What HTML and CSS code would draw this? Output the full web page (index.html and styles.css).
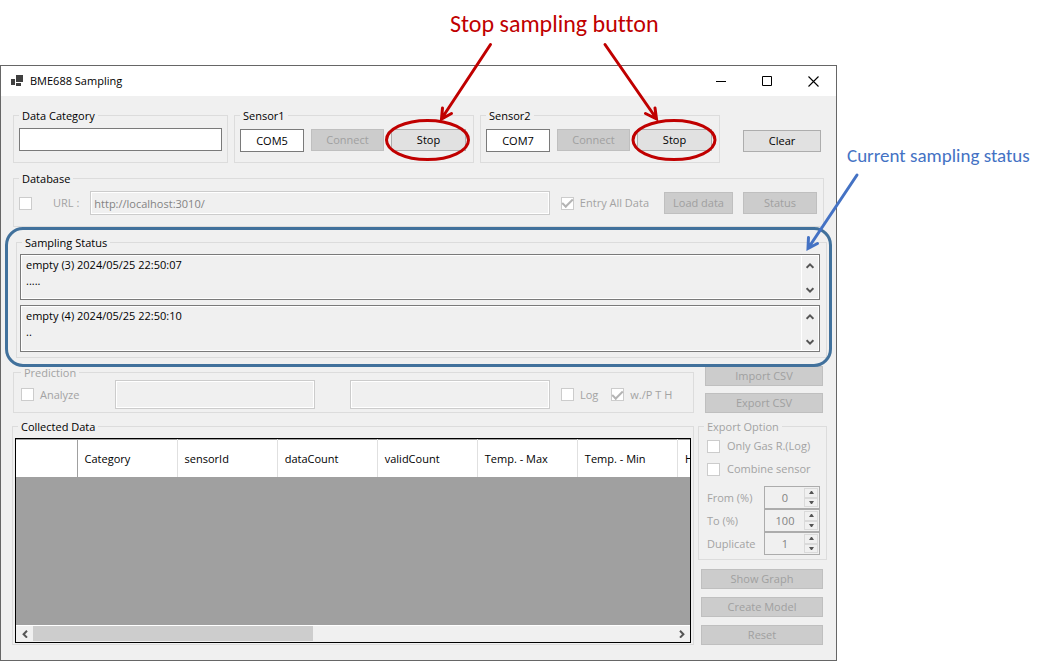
FILE: index.html
```
<!DOCTYPE html>
<html lang="en">
<head>
<meta charset="utf-8">
<title>BME688 Sampling</title>
<link rel="stylesheet" href="styles.css">
</head>
<body>
<svg class="symbols" aria-hidden="true">
  <symbol id="up" viewBox="0 0 8 8"><path d="M0.6 5.8 4 2.4 7.4 5.8" fill="none" stroke="#555" stroke-width="2"/></symbol>
  <symbol id="down" viewBox="0 0 8 8"><path d="M0.6 2.2 4 5.6 7.4 2.2" fill="none" stroke="#555" stroke-width="2"/></symbol>
  <symbol id="left" viewBox="0 0 8 8"><path d="M6 0.8 2.6 4.2 6 7.6" fill="none" stroke="#555" stroke-width="2"/></symbol>
  <symbol id="right" viewBox="0 0 8 8"><path d="M2 0.8 5.4 4.2 2 7.6" fill="none" stroke="#555" stroke-width="2"/></symbol>
  <symbol id="tri-up" viewBox="0 0 5 3"><path d="M0 3 2 0h1l2 3z" fill="#555"/></symbol>
  <symbol id="tri-down" viewBox="0 0 5 3"><path d="M0 0 2 3h1l2-3z" fill="#555"/></symbol>
</svg>
<div class="page">
  <p class="callout callout-stop">Stop sampling button</p>
  <main class="window">
    <header class="titlebar">
      <svg class="app-icon" width="12" height="12" viewBox="0 0 12 12" aria-hidden="true"><path fill="#404040" d="M5 0h7v7H5zM0 4h4v6H0zM5 8h5v3H5z"/></svg>
      <h1 class="title">BME688 Sampling</h1>
      <div class="window-controls">
        <button class="wc" aria-label="Minimize"><svg width="11" height="11" viewBox="0 0 11 11"><path d="M0 5.5h10" stroke="#000"/></svg></button>
        <button class="wc" aria-label="Maximize"><svg width="11" height="11" viewBox="0 0 11 11"><path d="M.5.5h9v9h-9z" fill="none" stroke="#000"/></svg></button>
        <button class="wc" aria-label="Close"><svg width="11" height="11" viewBox="0 0 11 11"><path d="M.5.5l10 10M10.500.5l-10 10" stroke="#000" stroke-width="1.1"/></svg></button>
      </div>
    </header>

    <div class="client">
      <div class="row top-row">
        <fieldset class="group category">
          <legend>Data Category</legend>
          <input class="text" type="text" aria-label="Data Category">
        </fieldset>
        <fieldset class="group sensor">
          <legend>Sensor1</legend>
          <input class="text port" type="text" value="COM5" aria-label="Sensor1 port">
          <button class="btn connect" disabled>Connect</button>
          <button class="btn stop">Stop</button>
        </fieldset>
        <fieldset class="group sensor">
          <legend>Sensor2</legend>
          <input class="text port" type="text" value="COM7" aria-label="Sensor2 port">
          <button class="btn connect" disabled>Connect</button>
          <button class="btn stop">Stop</button>
        </fieldset>
        <button class="btn clear">Clear</button>
      </div>

      <fieldset class="group database">
        <legend>Database</legend>
        <input type="checkbox" class="check" aria-label="Use database" disabled>
        <label class="off url-label" for="url">URL :</label>
        <input class="text url" id="url" type="text" value="http://localhost:3010/" disabled>
        <label class="option off entry"><input type="checkbox" class="check" checked disabled>Entry All Data</label>
        <button class="btn load" disabled>Load data</button>
        <button class="btn status-btn" disabled>Status</button>
      </fieldset>

      <div class="status-wrap">
        <fieldset class="group status">
          <legend>Sampling Status</legend>
          <div class="log">
            <textarea readonly aria-label="Sensor1 status">empty (3) 2024/05/25 22:50:07
.....</textarea>
            <div class="vbar">
              <button aria-label="Scroll up"><svg width="8" height="8"><use href="#up"/></svg></button>
              <button aria-label="Scroll down"><svg width="8" height="8"><use href="#down"/></svg></button>
            </div>
          </div>
          <div class="log">
            <textarea readonly aria-label="Sensor2 status">empty (4) 2024/05/25 22:50:10
..</textarea>
            <div class="vbar">
              <button aria-label="Scroll up"><svg width="8" height="8"><use href="#up"/></svg></button>
              <button aria-label="Scroll down"><svg width="8" height="8"><use href="#down"/></svg></button>
            </div>
          </div>
        </fieldset>
        <div class="ring"></div>
        <svg class="arrow-status" width="60" height="84" viewBox="800 170 60 84" fill="none" stroke="#4472c4" stroke-width="3" stroke-linecap="round" aria-hidden="true"><path d="M857 175 809 247M808.500 237.500 808 248.500 817.500 243.500"/></svg>
      </div>

      <div class="lower">
        <div class="main-col">
          <fieldset class="group prediction off">
            <legend>Prediction</legend>
            <label class="option analyze"><input type="checkbox" class="check" disabled>Analyze</label>
            <input class="text result" type="text" aria-label="Prediction 1" disabled>
            <input class="text result second" type="text" aria-label="Prediction 2" disabled>
            <label class="option log-opt"><input type="checkbox" class="check" disabled>Log</label>
            <label class="option"><input type="checkbox" class="check" checked disabled>w./P T H</label>
          </fieldset>
          <fieldset class="group collected">
            <legend>Collected Data</legend>
            <div class="grid-view">
              <div class="grid-body">
                <table>
                  <thead>
                    <tr><th class="corner"></th><th>Category</th><th>sensorId</th><th>dataCount</th><th>validCount</th><th>Temp. - Max</th><th>Temp. - Min</th><th>H</th></tr>
                  </thead>
                </table>
              </div>
              <div class="hbar">
                <button aria-label="Scroll left"><svg width="8" height="8"><use href="#left"/></svg></button>
                <div class="track"><div class="thumb"></div></div>
                <button aria-label="Scroll right"><svg width="8" height="8"><use href="#right"/></svg></button>
              </div>
            </div>
          </fieldset>
        </div>

        <div class="side-col">
          <div class="stack csv">
            <button class="btn" disabled>Import CSV</button>
            <button class="btn" disabled>Export CSV</button>
          </div>
          <fieldset class="group export off">
            <legend>Export Option</legend>
            <label class="option"><input type="checkbox" class="check" disabled>Only Gas R.(Log)</label>
            <label class="option"><input type="checkbox" class="check" disabled>Combine sensor</label>
            <div class="fields">
              <label for="from">From (%)</label>
              <div class="spin"><input id="from" type="number" value="0" disabled><div class="spin-btns"><button disabled aria-label="Increase"><svg width="5" height="3"><use href="#tri-up"/></svg></button><button disabled aria-label="Decrease"><svg width="5" height="3"><use href="#tri-down"/></svg></button></div></div>
              <label for="to">To (%)</label>
              <div class="spin"><input id="to" type="number" value="100" disabled><div class="spin-btns"><button disabled aria-label="Increase"><svg width="5" height="3"><use href="#tri-up"/></svg></button><button disabled aria-label="Decrease"><svg width="5" height="3"><use href="#tri-down"/></svg></button></div></div>
              <label for="dup">Duplicate</label>
              <div class="spin"><input id="dup" type="number" value="1" disabled><div class="spin-btns"><button disabled aria-label="Increase"><svg width="5" height="3"><use href="#tri-up"/></svg></button><button disabled aria-label="Decrease"><svg width="5" height="3"><use href="#tri-down"/></svg></button></div></div>
            </div>
          </fieldset>
          <div class="stack actions">
            <button class="btn" disabled>Show Graph</button>
            <button class="btn" disabled>Create Model</button>
            <button class="btn" disabled>Reset</button>
          </div>
        </div>
      </div>
    </div>
  </main>
  <p class="callout callout-status">Current sampling status</p>
  <svg class="marks" width="340" height="130" viewBox="380 40 340 130" fill="none" stroke="#c00000" stroke-width="3" stroke-linecap="round" aria-hidden="true">
    <ellipse cx="427.500" cy="140" rx="41" ry="19.500"/>
    <ellipse cx="674" cy="140" rx="41" ry="19.500"/>
    <path d="M490.500 44.500 442 118M442.500 108 441.500 119 451.500 113.500"/>
    <path d="M605 44.500 656 118M645.500 113.500 656.500 119 655 108"/>
  </svg>
</div>
</body>
</html>
```
FILE: styles.css
```
* { box-sizing: border-box; }

body {
  margin: 0;
  background: #fff;
  color: #000;
  font: 11px/16px "Open Sans", "Noto Sans", sans-serif;
}

button, input, textarea { font: inherit; color: inherit; margin: 0; }
button { padding: 0; }
svg { display: block; }
.symbols { position: absolute; width: 0; height: 0; }

.page {
  position: relative;
  display: grid;
  grid-template-columns: minmax(0, 1fr) 204px;
  grid-template-rows: 65px auto;
}

.callout {
  margin: 0;
  font-family: Carlito, Lato, sans-serif;
  font-variant-ligatures: none;
  white-space: nowrap;
}
.callout-stop {
  grid-column: 1 / -1;
  padding: 8px 0 0 450px;
  color: #c00000;
  font-size: 24px;
  line-height: 32px;
}
.callout-status {
  padding: 80px 0 0 10px;
  color: #4472c4;
  font-size: 19px;
  line-height: 22px;
}
.marks { position: absolute; left: 380px; top: 40px; pointer-events: none; }

.window { border: 1px solid #666; background: #f0f0f0; }

.titlebar {
  display: flex;
  align-items: center;
  height: 30px;
  padding-left: 10px;
  background: #fff;
}
.title { margin: 0 auto 0 7px; font-size: 11px; font-weight: 400; }
.window-controls { display: flex; }
.wc {
  display: grid;
  place-items: center;
  width: 46px;
  height: 30px;
  border: 0;
  background: none;
}

.client { padding: 13px 9px 15px 11px; }
.row { display: flex; }
.off { color: #a3a3a3; }

.group {
  display: flex;
  min-width: 0;
  margin: 0;
  border: 1px solid #dcdcdc;
}
.group legend { padding: 0 3px; line-height: 13px; }

.btn {
  flex: none;
  height: 22px;
  border: 1px solid #adadad;
  background: #e1e1e1;
  text-align: center;
}
.btn:disabled { border-color: #bfbfbf; background: #ccc; color: #a0a0a0; }

.text {
  min-width: 0;
  height: 24px;
  padding: 0 3px;
  border: 1px solid #7a7a7a;
  background: #fff;
}
.text:disabled {
  border-color: #ccc;
  background: #f0f0f0;
  box-shadow: inset 0 0 0 1px #fff;
  color: #838383;
}

.check {
  flex: none;
  display: grid;
  place-items: center;
  appearance: none;
  width: 13px;
  height: 13px;
  border: 1px solid #ccc;
  background: #fff;
}
.check:checked::before {
  content: "";
  width: 9px;
  height: 4px;
  border: solid #b4b4b4;
  border-width: 0 0 2px 2px;
  transform: translateY(-1px) rotate(-45deg);
}
.option { display: flex; align-items: center; gap: 6px; white-space: nowrap; }

.top-row { gap: 6px; padding-left: 1px; }
.category { width: 215px; padding: 6px 5px; }
.category .text { flex: 1; }
.sensor { width: 240px; padding: 7px 5px 10px; }
.top-row .text { height: 23px; }
.port { width: 64px; text-align: center; }
.connect { width: 73px; margin-left: 7px; }
.stop { width: 75px; margin-left: 7px; }
.clear { width: 78px; margin: 21px 6px 0 auto; }

.database { align-items: center; margin: 9px 3px 0 1px; padding: 6px 6px 11px 5px; }
.url-label { margin: 0 11px 0 21px; }
.url { flex: 1; }
.entry { margin-left: 11px; }
.load { width: 69px; margin-left: 15px; }
.status-btn { width: 74px; margin-left: 10px; }

.status-wrap { position: relative; margin: 9px 0 0 4px; }
.status { flex-direction: column; gap: 5px; padding: 5px 6px 5px 3px; }
.status legend { margin-left: 2px; }
.log {
  display: flex;
  height: 46px;
  border: 1px solid #7a7a7a;
  box-shadow: inset 0 0 0 1px #fff;
}
.log + .log { height: 47px; }
.log textarea {
  flex: 1;
  padding: 2px 5px;
  border: 0;
  background: none;
  resize: none;
  outline: 0;
  overflow: hidden;
}
.vbar {
  display: flex;
  flex-direction: column;
  justify-content: space-between;
  width: 18px;
  padding: 3px 0 1px;
  border-left: 1px solid #fff;
}
.vbar button, .hbar button {
  display: grid;
  place-items: center;
  width: 15px;
  height: 16px;
  border: 0;
  background: none;
}
.hbar button { width: 17px; }
.ring {
  position: absolute;
  inset: -9px -5px -9px -11px;
  border: 3px solid #41719c;
  border-radius: 18px;
  pointer-events: none;
}
.arrow-status { position: absolute; right: -33px; top: -66px; pointer-events: none; }

.lower { display: grid; grid-template-columns: minmax(0, 1fr) 129px; gap: 4px; margin-top: 8px; }
.main-col { display: flex; flex-direction: column; gap: 7px; }
.prediction { align-items: center; margin-left: 1px; padding: 1px 0 3px 7px; }
.analyze { width: 94px; }
.result { flex: 0 1 200px; height: 29px; }
.second { margin-left: 35px; }
.log-opt { margin: 0 13px 0 11px; }

.collected { flex: 1; padding: 5px 2px 1px; }
.collected legend { margin-left: 3px; }
.grid-view {
  display: flex;
  flex: 1;
  flex-direction: column;
  min-width: 0;
  border: 1px solid #000;
}
.grid-body { flex: 1; overflow: hidden; background: #a0a0a0; }
table { width: 762px; table-layout: fixed; border-collapse: collapse; background: #fff; }
th {
  width: 100px;
  height: 37px;
  padding: 1px 7px 0;
  border-top: 1px solid #a0a0a0;
  border-right: 1px solid #e0e0e0;
  font-weight: 400;
  text-align: left;
  white-space: nowrap;
}
th.corner { width: 61px; border-right-color: #a0a0a0; }
.hbar { display: flex; height: 17px; border-top: 1px solid #fff; background: #f0f0f0; }
.track { flex: 1; }
.thumb { width: 280px; max-width: 100%; height: 15px; background: #cdcdcd; }

.side-col { display: flex; flex-direction: column; }
.stack { display: flex; flex-direction: column; }
.stack .btn { height: 20px; }
.csv { gap: 7px; margin: 0 4px 7px 7px; }
.export { flex-direction: column; padding: 5px 6px 4px 8px; }
.export legend { margin-left: -3px; }
.export .option { gap: 7px; margin-bottom: 7px; }
.fields { display: grid; grid-template-columns: 1fr 56px; align-items: center; margin-top: 2px; }
.spin {
  display: flex;
  height: 23px;
  padding: 1px;
  border: 1px solid #acacac;
}
.spin input {
  flex: 1;
  min-width: 0;
  padding: 0;
  border: 0;
  background: none;
  color: #838383;
  text-align: center;
  appearance: textfield;
}
.spin input::-webkit-inner-spin-button { appearance: none; margin: 0; }
.spin-btns { display: flex; flex-direction: column; width: 14px; }
.spin-btns button {
  display: grid;
  flex: 1;
  place-items: center;
  border: 1px solid #dadada;
  background: #f0f0f0;
}
.actions { gap: 8px; margin: 9px 4px 0 3px; }
```
